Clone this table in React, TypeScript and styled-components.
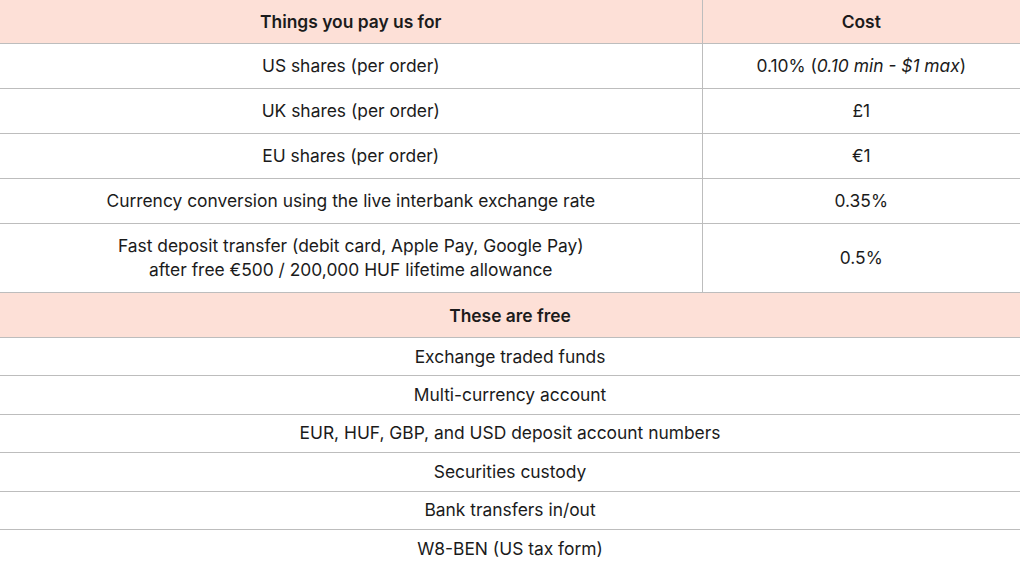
import React from "react";
import styled, { createGlobalStyle } from "styled-components";

const Global = createGlobalStyle`
  html, body { margin: 0; padding: 0; background: #ffffff; }
  body { font-family: "Inter", "Noto Sans", sans-serif; color: #1b1b1b; }
`;

const Table = styled.table`
  width: 1020px;
  border-collapse: collapse;
  table-layout: fixed;
  font-size: 17.4px;
`;

const HeadCell = styled.th<{ $h: number }>`
  background: #fde0d7;
  font-weight: 600;
  height: ${(p) => p.$h}px;
  padding: 0;
  text-align: center;
  border-bottom: 1px solid #bdbdbd;
  border-right: 1px solid #bdbdbd;
  &:last-child { border-right: none; }
`;

const Cell = styled.td<{ $h: number }>`
  height: ${(p) => p.$h}px;
  padding: 0;
  text-align: center;
  line-height: 24px;
  font-weight: 400;
  border-bottom: 1px solid #bdbdbd;
  border-right: 1px solid #bdbdbd;
  &:last-child { border-right: none; }
`;

const Row = styled.tr<{ $last?: boolean }>`
  ${(p) => (p.$last ? "td { border-bottom: none; }" : "")}
`;

const paid: { item: React.ReactNode; cost: React.ReactNode; h?: number }[] = [
  { item: "US shares (per order)", cost: <>0.10% (<i>0.10 min - $1 max</i>)</> },
  { item: "UK shares (per order)", cost: "£1" },
  { item: "EU shares (per order)", cost: "€1" },
  { item: "Currency conversion using the live interbank exchange rate", cost: "0.35%" },
  {
    item: (
      <>
        Fast deposit transfer (debit card, Apple Pay, Google Pay)
        <br />
        after free €500 / 200,000 HUF lifetime allowance
      </>
    ),
    cost: "0.5%",
    h: 68,
  },
];

const free = [
  "Exchange traded funds",
  "Multi-currency account",
  "EUR, HUF, GBP, and USD deposit account numbers",
  "Securities custody",
  "Bank transfers in/out",
  "W8-BEN (US tax form)",
];

export default function App() {
  return (
    <>
      <Global />
      <Table>
        <colgroup>
          <col style={{ width: 702 }} />
          <col style={{ width: 318 }} />
        </colgroup>
        <thead>
          <tr>
            <HeadCell $h={43}>Things you pay us for</HeadCell>
            <HeadCell $h={43}>Cost</HeadCell>
          </tr>
        </thead>
        <tbody>
          {paid.map((r, i) => (
            <tr key={i}>
              <Cell $h={r.h ?? 44}>{r.item}</Cell>
              <Cell $h={r.h ?? 44}>{r.cost}</Cell>
            </tr>
          ))}
          <tr>
            <HeadCell $h={44} colSpan={2}>These are free</HeadCell>
          </tr>
          {free.map((f, i) => (
            <Row key={f} $last={i === free.length - 1}>
              <Cell colSpan={2} $h={37.4}>{f}</Cell>
            </Row>
          ))}
        </tbody>
      </Table>
    </>
  );
}
